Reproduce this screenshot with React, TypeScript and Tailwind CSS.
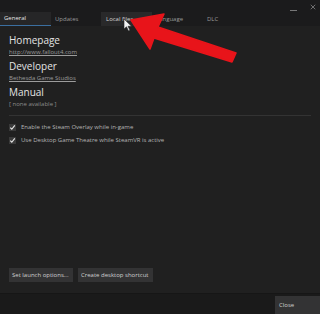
import React from 'react';

const tabs = ['General', 'Updates', 'Local files', 'Language', 'DLC'];

function Check({ label }: { label: string }) {
  return (
    <div className="flex items-center gap-[5px] h-[13px]">
      <span className="w-[7px] h-[7px] bg-[#3a3a3a] flex items-center justify-center">
        <svg viewBox="0 0 8 8" className="w-[7px] h-[7px]">
          <path d="M1.5 4.2 L3.2 6 L6.6 1.6" fill="none" stroke="#e8e8e8" strokeWidth="1.3" />
        </svg>
      </span>
      <span className="text-[6px] text-[#b4b4b4]">{label}</span>
    </div>
  );
}

export default function App() {
  return (
    <div
      className="relative w-[320px] h-[314px] bg-[#202020] overflow-hidden flex flex-col"
      style={{ fontFamily: '"Open Sans", "Noto Sans", sans-serif' }}
    >
      {/* title strip */}
      <div className="h-[12px] bg-[#1b1b1c] flex items-center justify-end pr-[4px] gap-[13px] text-[#8a8a8a]">
        <span className="w-[7px] h-px bg-[#777] mt-[8px]" />
        <svg viewBox="0 0 8 8" className="w-[6px] h-[6px] mt-[2px]">
          <path d="M1 1 L7 7 M7 1 L1 7" stroke="#8a8a8a" strokeWidth="1" />
        </svg>
      </div>

      {/* tabs */}
      <div className="h-[14px] bg-[#1b1b1c] flex text-[6px] text-[#9a9a9a]">
        {tabs.map((t, i) => (
          <div
            key={t}
            className={`w-[51px] h-full flex items-center pl-[4px] ${
              i === 0 ? 'bg-[#262627] text-[#e6e6e6] border-b border-[#3b6fa0]' : ''
            } ${i === 2 ? 'bg-[#29292a] text-[#d6d6d6] ml-[-1px] pl-[5px]' : ''}`}
          >
            {t}
          </div>
        ))}
      </div>

      {/* body */}
      <div className="flex-1 px-[9px] pt-[7px] flex flex-col">
        <div className="text-[10px] leading-[14px] text-[#e4e4e4]">Homepage</div>
        <div className="text-[6px] leading-[10px] text-[#9c9c9c] underline mb-[2px]">http://www.fallout4.com</div>
        <div className="text-[10px] leading-[14px] text-[#e4e4e4]">Developer</div>
        <div className="text-[6px] leading-[10px] text-[#9c9c9c] underline mb-[2px]">Bethesda Game Studios</div>
        <div className="text-[10px] leading-[14px] text-[#e4e4e4]">Manual</div>
        <div className="text-[6px] leading-[10px] text-[#8c8c8c]">[ none available ]</div>

        <div className="h-px bg-[#333] mt-[6px] mb-[5px]" />

        <Check label="Enable the Steam Overlay while in-game" />
        <Check label="Use Desktop Game Theatre while SteamVR is active" />

        <div className="flex-1" />

        <div className="flex gap-[5px] mb-[11px]">
          <div className="h-[14px] px-[3px] bg-[#333334] text-[6px] text-[#d0d0d0] flex items-center w-[64px]">
            Set launch options...
          </div>
          <div className="h-[14px] px-[3px] bg-[#333334] text-[6px] text-[#d0d0d0] flex items-center w-[75px]">
            Create desktop shortcut
          </div>
        </div>
      </div>

      {/* footer */}
      <div className="h-[21px] bg-[#1a1a1a] border-t border-[#161616] flex justify-end items-end">
        <div className="w-[45px] h-[18px] bg-[#333334] text-[6px] text-[#d0d0d0] flex items-center pl-[4px]">
          Close
        </div>
      </div>

      {/* red annotation arrow */}
      <svg className="absolute left-0 top-0 w-[320px] h-[314px] pointer-events-none" viewBox="0 0 320 314">
        <path
          d="M131 20 L164 14 L158 27 L236 53 L232 62 L154 38 L150 49 Z"
          fill="#e8141a"
          stroke="#e8141a"
          strokeWidth="1.5"
          strokeLinejoin="round"
        />
        <path
          d="M124 19 L124 29 L126.5 26.8 L128.5 31 L130 30.3 L128 26.3 L131.5 26.2 Z"
          fill="#f2f2f2"
          stroke="#222"
          strokeWidth="0.6"
        />
      </svg>
    </div>
  );
}
